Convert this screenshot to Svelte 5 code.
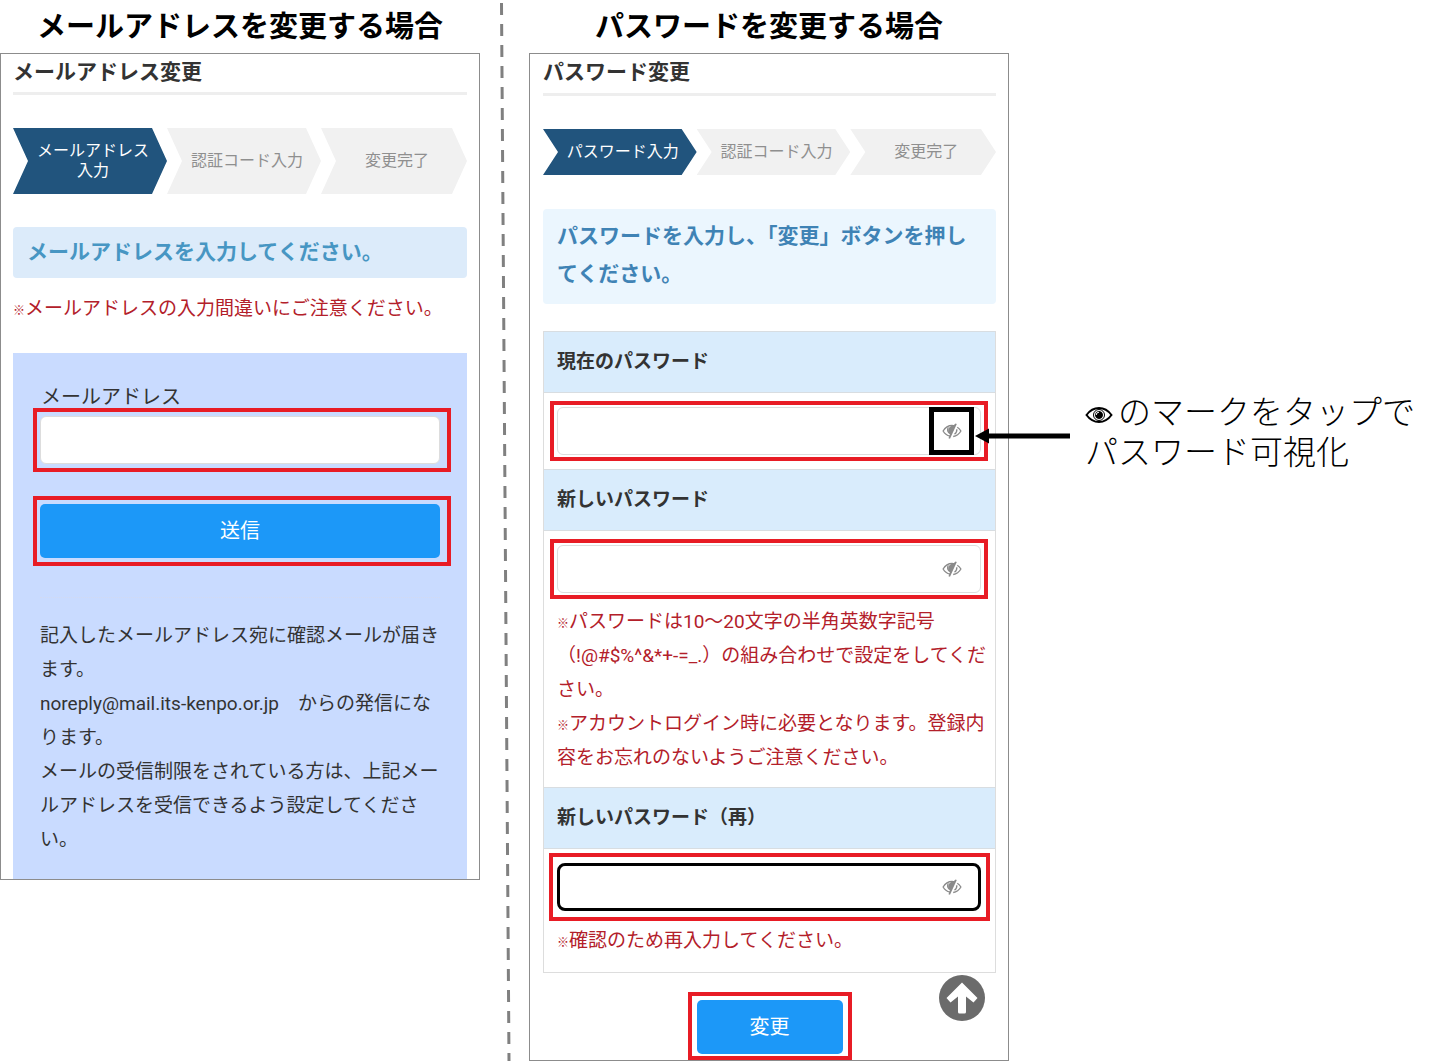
<script lang="ts">
  type Field = {
    id: string;
    label: string;
    notes: string[];
    active?: boolean;
    callout?: boolean;
  };

  const mailSteps = ['メールアドレス\n入力', '認証コード入力', '変更完了'];
  const passwordSteps = ['パスワード入力', '認証コード入力', '変更完了'];

  const fields: Field[] = [
    { id: 'current', label: '現在のパスワード', notes: [], callout: true },
    {
      id: 'new',
      label: '新しいパスワード',
      notes: [
        'パスワードは10〜20文字の半角英数字記号\n（!@#$%^&*+-=_.）の組み合わせで設定をしてください。',
        'アカウントログイン時に必要となります。登録内容をお忘れのないようご注意ください。',
      ],
    },
    {
      id: 'confirm',
      label: '新しいパスワード（再）',
      notes: ['確認のため再入力してください。'],
      active: true,
    },
  ];

  let shown = $state<Record<string, boolean>>({});
</script>

{#snippet steps(items: string[])}
  <ol class="steps">
    {#each items as item, i}
      <li class:current={i === 0}>{item}</li>
    {/each}
  </ol>
{/snippet}

<main class="guide" lang="ja">
  <section class="case">
    <h1>メールアドレスを変更する場合</h1>
    <div class="panel">
      <h2>メールアドレス変更</h2>
      {@render steps(mailSteps)}
      <p class="lead mail-lead">メールアドレスを入力してください。</p>
      <p class="caution"><span class="mark">※</span>メールアドレスの入力間違いにご注意ください。</p>

      <form class="mail-form" onsubmit={(e) => e.preventDefault()}>
        <label for="mail">メールアドレス</label>
        <div class="frame mail-frame"><input id="mail" type="email" /></div>
        <div class="frame mail-frame send"><button class="primary">送信</button></div>
        <hr />
        <p>記入したメールアドレス宛に確認メールが届きます。</p>
        <p>noreply@mail.its-kenpo.or.jp　からの発信になります。</p>
        <p>メールの受信制限をされている方は、上記メールアドレスを受信できるよう設定してください。</p>
      </form>
    </div>
  </section>

  <div class="divider">
    <svg viewBox="0 0 49 1064" preserveAspectRatio="none" aria-hidden="true">
      <line x1="21.5" y1="3" x2="29" y2="1064" />
    </svg>
  </div>

  <section class="case">
    <h1>パスワードを変更する場合</h1>
    <div class="panel password-panel">
      <h2>パスワード変更</h2>
      {@render steps(passwordSteps)}
      <p class="lead">パスワードを入力し、「変更」ボタンを押してください。</p>

      <form onsubmit={(e) => e.preventDefault()}>
        <div class="fields">
          {#each fields as field (field.id)}
            <label class="field-label" for={field.id}>{field.label}</label>
            <div class="field-body" class:active={field.active}>
              <div class="frame">
                <div class="password">
                  <input id={field.id} type={shown[field.id] ? 'text' : 'password'} />
                  <button
                    type="button"
                    class="toggle"
                    class:callout={field.callout}
                    aria-label="パスワードを表示"
                    onclick={() => (shown[field.id] = !shown[field.id])}
                  >
                    <svg class="eye-off" viewBox="0 0 20 16" aria-hidden="true">
                      <path d="M8 13.2C4.8 12.4 2.4 10.3 1.1 8 3.1 4.6 6.2 2.5 10 2.5c1 0 1.9.1 2.7.4" />
                      <path d="M6.3 4.3c-1 2-.7 4.7 1.5 6.3" />
                      <path d="M15.3 4.2c1.5.9 2.7 2.2 3.6 3.8-1.7 3-4.4 5-7.7 5.5" />
                      <path d="M14.8 6.2c.2 2.1-.7 3.8-2.3 4.9" />
                      <path class="solid" d="M6.2 6.8C6.6 4.4 8.5 2.8 11 2.7L13.6.4l1.2.5L8 15.7l-1.5-.5L8 11c-1.3-1.1-2-2.7-1.8-4.2z" />
                    </svg>
                  </button>
                  {#if field.callout}
                    <svg class="arrow" viewBox="0 0 95 16" aria-hidden="true">
                      <path d="M0 8 14 .5V5.5H95v5H14v5z" />
                    </svg>
                  {/if}
                </div>
              </div>
              {#each field.notes as note}
                <p class="caution"><span class="mark">※</span>{note}</p>
              {/each}
            </div>
          {/each}
        </div>
        <div class="frame change"><button class="primary">変更</button></div>
      </form>

      <button class="to-top" aria-label="ページの先頭へ">
        <svg viewBox="0 0 46 46" aria-hidden="true">
          <circle cx="23" cy="23" r="23" />
          <path
            d="M23 7.5 38.5 23l-4 4.5-7.500-6V37a1.500 1.500 0 0 1-1.500 1.500h-5A1.500 1.500 0 0 1 19 37V21.500l-7.500 6-4-4.500z"
          />
        </svg>
      </button>
    </div>
  </section>

  <aside>
    <p>
      <svg class="eye" viewBox="0 0 28 18" role="img" aria-label="目">
        <path d="M1.5 9C5 4.2 9.2 2 14 2s9 2.2 12.5 7C23 13.8 18.8 16 14 16S5 13.800 1.500 9z" />
        <circle cx="14" cy="9" r="5.5" />
        <circle class="pupil" cx="14" cy="9" r="3.5" />
        <path class="glint" d="M14 6.2A2.800 2.800 0 0 0 11.200 9" />
      </svg>のマークをタップで<br />パスワード可視化
    </p>
  </aside>
</main>

<style>
  :global(body) {
    margin: 0;
    background: #fff;
  }
  .guide,
  .guide :is(*) {
    box-sizing: border-box;
  }
  .guide {
    display: grid;
    grid-template-columns: 480fr 49fr 480fr 428fr;
    align-items: start;
    font-family: Roboto, 'Noto Sans CJK JP', sans-serif;
    font-size: 19px;
    line-height: 34px;
    color: #333;
  }
  .case {
    min-width: 0;
  }
  h1,
  h2,
  p,
  ol {
    margin: 0;
  }
  h1 {
    padding-top: 2px;
    font-size: 29px;
    line-height: 51px;
    font-weight: 700;
    text-align: center;
    color: #000;
  }
  .panel {
    position: relative;
    padding: 0 12px;
    border: 1px solid #8c8c8c;
  }
  .password-panel {
    padding-left: 13px;
  }
  h2 {
    padding-bottom: 2px;
    border-bottom: 3px solid #eee;
    font-size: 21px;
    line-height: 36px;
    font-weight: 700;
  }
  .password-panel h2 {
    padding-bottom: 3px;
  }

  .steps {
    display: grid;
    grid-template-columns: 154fr 154fr 146fr;
    margin: 33px 0;
    padding: 0;
    list-style: none;
    font-size: 16px;
    line-height: 20px;
    text-align: center;
    white-space: pre-line;
  }
  .password-panel .steps {
    margin-bottom: 34px;
  }
  .steps li {
    display: flex;
    align-items: center;
    justify-content: center;
    padding: 13px 0 13px 6px;
    background: #f1f1f1;
    color: #8f8f8f;
    clip-path: polygon(0 0, calc(100% - 15px) 0, 100% 50%, calc(100% - 15px) 100%, 0 100%, 15px 50%);
  }
  .steps .current {
    background: #21547d;
    color: #fff;
  }

  .lead {
    padding: 8px 14px 11px;
    border-radius: 4px;
    background: #ebf6fe;
    font-size: 21px;
    line-height: 38px;
    font-weight: 700;
    color: #3f83b5;
  }
  .mail-lead {
    margin-bottom: 14px;
    padding: 6px 14px 7px;
    background: #dcebfa;
    color: #4796c3;
  }
  .caution {
    color: #b3202a;
    white-space: pre-line;
  }
  .mark {
    font-size: 12px;
    line-height: 12px;
    font-weight: 700;
  }

  .frame {
    padding: 2px 3px;
    border: 4px solid #e81c25;
  }
  input {
    display: block;
    width: 100%;
    height: 48px;
    padding: 0 52px 0 12px;
    border: 1px solid #ddd;
    border-radius: 6px;
    background: #fff;
    font: inherit;
    outline: none;
  }
  .primary {
    display: block;
    width: 100%;
    height: 54px;
    border: none;
    border-radius: 5px;
    background: #1c98f8;
    font: inherit;
    font-size: 20px;
    color: #fff;
  }

  .mail-form {
    margin-top: 27px;
    padding: 33px 16px 22px 20px;
    background: #c9dbff;
  }
  .mail-form label {
    display: block;
    padding-left: 8px;
    font-size: 20px;
    line-height: 22px;
  }
  .mail-form p {
    padding: 0 11px 0 7px;
  }
  .mail-frame {
    padding: 4px 7px 4px 3px;
  }
  .send {
    margin-top: 24px;
  }
  hr {
    margin: 31px 11px 21px 7px;
    border: none;
    border-top: 1px dotted #d2daf2;
  }

  .divider {
    align-self: stretch;
    position: relative;
  }
  .divider svg {
    position: absolute;
    width: 100%;
    height: 100%;
  }
  .divider line {
    stroke: #808080;
    stroke-width: 3;
    stroke-dasharray: 12 9;
    vector-effect: non-scaling-stroke;
  }

  .fields {
    margin-top: 27px;
    border: 1px solid #ddd;
    border-top: none;
  }
  .field-label {
    display: block;
    padding: 13px;
    border: solid #d8dde1;
    border-width: 1px 0;
    background: #d9ecfc;
    font-weight: 700;
  }
  .field-body {
    padding: 8px 7px 8px 6px;
  }
  .field-body .caution {
    margin-right: -4px;
    padding-left: 7px;
  }
  .field-body .frame + .caution {
    margin-top: 6px;
  }
  .field-body .caution:last-child {
    margin-bottom: 4px;
  }
  .active {
    padding: 4px 5px 10px;
  }
  .active .frame {
    padding: 6px 5px 6px 4px;
  }
  .active .frame + .caution {
    margin-top: 3px;
    padding-left: 8px;
  }
  .active input {
    border: 3px solid #000;
    border-radius: 8px;
  }
  .password {
    position: relative;
  }
  .toggle {
    position: absolute;
    top: 0;
    right: 7px;
    display: flex;
    align-items: center;
    justify-content: center;
    width: 45px;
    height: 48px;
    padding: 0;
    border: 5px solid transparent;
    background: none;
  }
  .callout {
    border-color: #000;
    background: #fff;
  }
  .eye-off {
    width: 20px;
    height: 16px;
    fill: none;
    stroke: #8a8a8a;
    stroke-width: 1.3;
  }
  .eye-off .solid {
    fill: #8a8a8a;
    stroke: none;
  }
  .arrow {
    position: absolute;
    top: 21px;
    left: calc(100% - 6px);
    width: 95px;
    height: 16px;
    z-index: 1;
  }
  .change {
    width: 164px;
    margin: 19px auto 0;
    padding: 4px 5px 2px;
  }
  .to-top {
    position: absolute;
    right: 23px;
    bottom: 39px;
    width: 46px;
    height: 46px;
    padding: 0;
    border: none;
    border-radius: 50%;
    background: none;
  }
  .to-top svg {
    display: block;
    fill: #6b6b6b;
  }
  .to-top path {
    fill: #fff;
  }

  aside {
    padding: 390px 0 0 76px;
    font-family: 'Noto Sans CJK JP', sans-serif;
    font-size: 33px;
    font-weight: 300;
    line-height: 40px;
    color: #000;
    white-space: nowrap;
  }
  .eye {
    width: 28px;
    height: 18px;
    margin-right: 5px;
    fill: none;
    stroke: #000;
    stroke-width: 2;
  }
  .eye circle {
    stroke-width: 1;
  }
  .eye .pupil {
    fill: #000;
  }
  .eye .glint {
    stroke: #fff;
    stroke-width: 1;
  }
</style>
